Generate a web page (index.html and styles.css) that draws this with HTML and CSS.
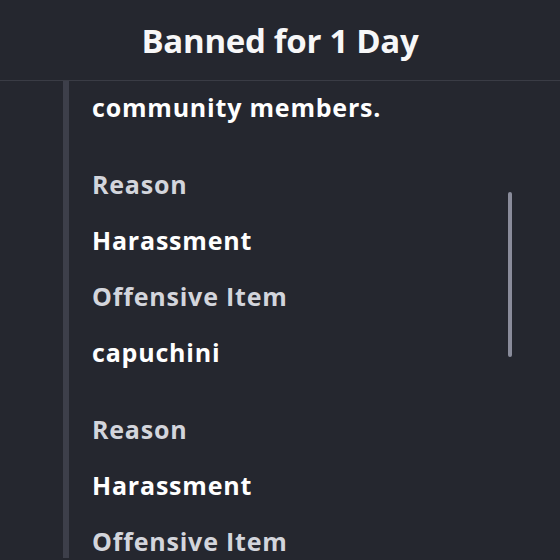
FILE: index.html
```html
<!DOCTYPE html>
<html>
<head>
<meta charset="utf-8">
<link rel="stylesheet" href="styles.css">
</head>
<body>
<div class="modal">
  <header class="header"><h1 class="title">Banned for 1 Day</h1></header>
  <div class="body">
    <div class="scroll">
      <p class="text">community members.</p>
      <div class="group">
        <div class="label">Reason</div>
        <div class="value">Harassment</div>
        <div class="label">Offensive Item</div>
        <div class="value">capuchini</div>
      </div>
      <div class="group">
        <div class="label">Reason</div>
        <div class="value">Harassment</div>
        <div class="label">Offensive Item</div>
        <div class="value">capuchini</div>
      </div>
    </div>
    <div class="scrollbar"></div>
  </div>
</div>
</body>
</html>
```
FILE: styles.css
```css
html, body {
  margin: 0;
  padding: 0;
  background: #25272f;
  height: 100%;
  overflow: hidden;
}
.modal {
  font-family: "Open Sans", "Noto Sans", sans-serif;
  color: #ffffff;
  height: 560px;
  display: flex;
  flex-direction: column;
}
.header {
  height: 80px;
  border-bottom: 1px solid #3a3c45;
  display: flex;
  align-items: center;
  justify-content: center;
  flex-shrink: 0;
}
.title {
  margin: 0;
  font-size: 33px;
  font-weight: 700;
  letter-spacing: -0.3px;
  color: #f7f7f8;
}
.body {
  position: relative;
  flex: 1;
  overflow: hidden;
}
.scroll {
  margin-left: 63px;
  border-left: 6px solid #3d3f4a;
  padding-left: 23px;
  height: 100%;
  box-sizing: border-box;
}
.text {
  margin: 0;
  font-size: 25px;
  font-weight: 700;
  letter-spacing: 0.8px;
  line-height: 56px;
  margin-top: -2px;
}
.group {
  margin-top: 21px;
}
.label, .value {
  font-size: 25px;
  line-height: 56px;
  font-weight: 700;
  letter-spacing: 0.8px;
}
.label {
  color: #d3d5dc;
}
.value {
  color: #ffffff;
}
.scrollbar {
  position: absolute;
  left: 508px;
  top: 111px;
  width: 4px;
  height: 165px;
  border-radius: 2px;
  background: #8a8c9b;
}
```
